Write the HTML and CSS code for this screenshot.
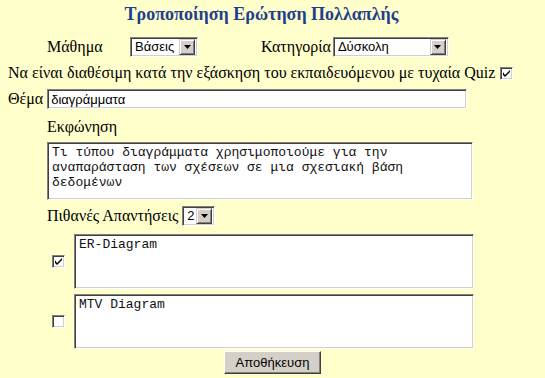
FILE: index.html
```html
<!DOCTYPE html>
<html lang="el">
<head>
<meta charset="utf-8">
<title>Τροποποίηση Ερώτηση Πολλαπλής</title>
<link rel="stylesheet" href="styles.css">
</head>
<body>
<form class="page">
  <h1 class="title">Τροποποίηση Ερώτηση Πολλαπλής</h1>

  <div class="row row-meta">
    <span class="label lbl-lesson">Μάθημα</span>
    <span class="select sel-lesson"><span class="sel-text">Βάσεις</span><span class="sel-btn"><svg width="7" height="4" viewBox="0 0 7 4"><path d="M0 0h7L3.5 4z" fill="#000"/></svg></span></span>
    <span class="label lbl-cat">Κατηγορία</span>
    <span class="select sel-cat"><span class="sel-text">Δύσκολη</span><span class="sel-btn"><svg width="7" height="4" viewBox="0 0 7 4"><path d="M0 0h7L3.5 4z" fill="#000"/></svg></span></span>
  </div>

  <div class="row row-quiz">
    <span class="label">Να είναι διαθέσιμη κατά την εξάσκηση του εκπαιδευόμενου με τυχαία Quiz</span>
    <span class="check"><svg width="7" height="7" viewBox="0 0 7 7"><path d="M0 2v3l2 2l5-5v-2l-5 5z" fill="#000"/></svg></span>
  </div>

  <div class="row row-subject">
    <span class="label">Θέμα</span>
    <span class="field subject">διαγράμματα</span>
  </div>

  <div class="block">
    <div class="label lbl-stem">Εκφώνηση</div>
    <div class="field area stem">Τι τύπου διαγράμματα χρησιμοποιούμε για την αναπαράσταση των σχέσεων σε μια σχεσιακή βάση δεδομένων</div>

    <div class="row row-count">
      <span class="label">Πιθανές Απαντήσεις</span>
      <span class="select sel-count"><span class="sel-text">2</span><span class="sel-btn"><svg width="7" height="4" viewBox="0 0 7 4"><path d="M0 0h7L3.5 4z" fill="#000"/></svg></span></span>
    </div>

    <div class="answer">
      <span class="check"><svg width="7" height="7" viewBox="0 0 7 7"><path d="M0 2v3l2 2l5-5v-2l-5 5z" fill="#000"/></svg></span>
      <div class="field area ans">ER-Diagram</div>
    </div>
    <div class="answer">
      <span class="check"></span>
      <div class="field area ans">MTV Diagram</div>
    </div>
  </div>

  <div class="actions">
    <button type="button" class="btn">Αποθήκευση</button>
  </div>
</form>
</body>
</html>
```

FILE: styles.css
```css
html, body {
  margin: 0;
  padding: 0;
  background: #ffffcc;
}
body {
  width: 545px;
  height: 378px;
  overflow: hidden;
  font-family: "Liberation Serif", "Times New Roman", serif;
  font-size: 16px;
  color: #000;
}
.page {
  padding: 0 0 0 8px;
  display: flex;
  flex-direction: column;
}
.title {
  margin: 3px 0 0 0;
  height: 22px;
  font-size: 18px;
  line-height: 22px;
  font-weight: bold;
  color: #1f3f8c;
  text-align: center;
  padding-right: 30px;
}
.row {
  display: flex;
  align-items: center;
}
.label {
  white-space: nowrap;
}
.row-meta {
  margin-top: 12px;
  height: 20px;
}
.lbl-lesson { margin-left: 39px; width: 83px; }
.lbl-cat { margin-left: 63px; margin-right: 2px; }

.select {
  display: inline-flex;
  align-items: center;
  box-sizing: border-box;
  height: 20px;
  background: #fff;
  border: 1px solid;
  border-color: #808080 #ffffff #ffffff #808080;
  box-shadow: inset 1px 1px 0 #404040, inset -1px -1px 0 #d4d0c8;
  padding: 2px;
  font-family: "Liberation Sans", Arial, sans-serif;
  font-size: 13px;
}
.sel-text {
  flex: 1;
  padding-left: 2px;
  line-height: 14px;
}
.sel-btn {
  width: 16px;
  height: 16px;
  box-sizing: border-box;
  background: #d4d0c8;
  border: 1px solid;
  border-color: #d4d0c8 #404040 #404040 #d4d0c8;
  box-shadow: inset 1px 1px 0 #fff, inset -1px -1px 0 #808080;
  display: flex;
  align-items: center;
  justify-content: center;
}
.sel-lesson { width: 68px; }
.sel-cat { width: 116px; }
.sel-count { width: 33px; margin-left: 4px; }

.row-quiz {
  margin-top: 6px;
  height: 20px;
}
.check {
  display: inline-flex;
  align-items: center;
  justify-content: center;
  box-sizing: border-box;
  width: 13px;
  height: 13px;
  background: #fff;
  border: 1px solid;
  border-color: #808080 #ffffff #ffffff #808080;
  box-shadow: inset 1px 1px 0 #404040, inset -1px -1px 0 #d4d0c8;
}
.row-quiz .check { margin-left: 5px; }

.field {
  box-sizing: border-box;
  background: #fff;
  border: 1px solid;
  border-color: #808080 #ffffff #ffffff #808080;
  box-shadow: inset 1px 1px 0 #404040, inset -1px -1px 0 #d4d0c8;
}
.row-subject {
  margin-top: 6px;
  height: 20px;
}
.subject {
  margin-left: 4px;
  width: 420px;
  height: 20px;
  padding: 2px 3px;
  font-family: "Liberation Sans", Arial, sans-serif;
  font-size: 13px;
  line-height: 15px;
}
.block {
  padding-left: 39px;
  display: flex;
  flex-direction: column;
}
.lbl-stem {
  margin-top: 8px;
  line-height: 20px;
}
.area {
  font-family: "Liberation Mono", "Courier New", monospace;
  font-size: 13px;
  line-height: 15px;
  padding: 2px 4px;
  color: #111;
}
.stem {
  margin-top: 5px;
  width: 426px;
  height: 58px;
}
.row-count {
  margin-top: 6px;
  height: 20px;
}
.answer {
  margin-top: 8px;
  display: flex;
  align-items: center;
}
.answer .check { margin-left: 5px; margin-right: 9px; }
.ans {
  width: 400px;
  height: 55px;
}
.answer + .answer { margin-top: 5px; }

.actions {
  display: flex;
  justify-content: center;
  margin-top: 2px;
  padding-right: 8px;
}
.btn {
  box-sizing: border-box;
  width: 97px;
  height: 23px;
  background: #d4d0c8;
  border: 1px solid;
  border-color: #ffffff #404040 #404040 #ffffff;
  box-shadow: inset -1px -1px 0 #808080, inset 1px 1px 0 #d4d0c8;
  font-family: "Liberation Sans", Arial, sans-serif;
  font-size: 13px;
  color: #000;
  padding: 0;
}
```
